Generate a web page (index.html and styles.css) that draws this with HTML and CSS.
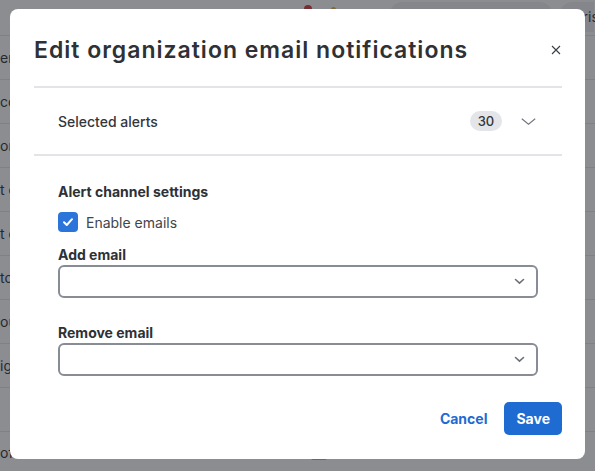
FILE: index.html
```html
<!DOCTYPE html>
<html lang="en">
<head>
<meta charset="utf-8">
<title>Edit organization email notifications</title>
<link rel="stylesheet" href="styles.css">
</head>
<body>
<div class="app">
  <div class="topbar">
    <span class="dot dot-red"></span>
    <span class="dot dot-yellow"></span>
    <span class="pill pill-search"></span>
    <span class="pill pill-user">Chris</span>
  </div>
  <div class="rows">
    <div class="row"><span class="cell">er</span></div>
    <div class="row"><span class="cell">co</span></div>
    <div class="row"><span class="cell">on</span></div>
    <div class="row"><span class="cell">t c</span></div>
    <div class="row"><span class="cell">t c</span></div>
    <div class="row"><span class="cell">tc</span></div>
    <div class="row"><span class="cell">ou</span></div>
    <div class="row"><span class="cell">ig</span></div>
    <div class="row"><span class="cell"></span></div>
    <div class="row row-last"><span class="cell">of cats</span><span class="tag"></span></div>
  </div>
</div>
<div class="overlay"></div>
<div class="modal" role="dialog" aria-labelledby="dlg-title">
  <div class="modal-header">
    <h1 id="dlg-title" class="modal-title">Edit organization email notifications</h1>
    <button class="close" aria-label="Close">
      <svg width="10" height="10" viewBox="0 0 10 10"><path d="M1 1L9 9M9 1L1 9" stroke="#3a3d42" stroke-width="1.1" fill="none"/></svg>
    </button>
  </div>
  <div class="alerts-row">
    <span class="alerts-label">Selected alerts</span>
    <span class="alerts-right">
      <span class="badge">30</span>
      <svg class="chev-lg" width="15" height="7" viewBox="0 0 15 7"><path d="M0.8 0.8L7.5 6.2L14.2 0.8" stroke="#70757e" stroke-width="1.1" fill="none"/></svg>
    </span>
  </div>
  <div class="settings">
    <div class="section-title">Alert channel settings</div>
    <label class="check-row">
      <span class="checkbox">
        <svg width="12" height="10" viewBox="0 0 12 10"><path d="M2 5.2L4.8 8L10 2.2" stroke="#fff" stroke-width="2" fill="none" stroke-linecap="round" stroke-linejoin="round"/></svg>
      </span>
      <span class="check-label">Enable emails</span>
    </label>
    <div class="field">
      <div class="field-label">Add email</div>
      <div class="select">
        <svg width="11" height="7" viewBox="0 0 11 7"><path d="M1.5 1.5L5.5 5.2L9.5 1.5" stroke="#6b7079" stroke-width="1.6" fill="none" stroke-linecap="round"/></svg>
      </div>
    </div>
    <div class="field field-2">
      <div class="field-label">Remove email</div>
      <div class="select">
        <svg width="11" height="7" viewBox="0 0 11 7"><path d="M1.5 1.5L5.5 5.2L9.5 1.5" stroke="#6b7079" stroke-width="1.6" fill="none" stroke-linecap="round"/></svg>
      </div>
    </div>
  </div>
  <div class="modal-footer">
    <button class="btn-text">Cancel</button>
    <button class="btn-primary">Save</button>
  </div>
</div>
</body>
</html>
```
FILE: styles.css
```css
* { box-sizing: border-box; }
html, body { margin: 0; padding: 0; }
body {
  width: 595px;
  height: 471px;
  overflow: hidden;
  background: #ffffff;
  font-family: Inter, "Liberation Sans", sans-serif;
  position: relative;
}

/* background page */
.app { width: 595px; overflow: hidden; }
.topbar {
  height: 36px;
  border-bottom: 1px solid #e4e5e8;
  display: flex;
  align-items: flex-start;
  overflow: hidden;
}
.dot { display: block; border-radius: 50%; margin-top: 5px; }
.dot-red { width: 8px; height: 8px; background: #d9383a; margin-left: 304px; }
.dot-yellow { width: 5px; height: 5px; background: #f2b233; margin-left: 19px; margin-top: 7px; }
.pill { display: block; border-radius: 12px; margin-top: 2px; height: 30px; flex-shrink: 0; }
.pill-search { width: 162px; background: #f0f0f2; margin-left: 54px; }
.pill-user {
  width: 34px; background: #f0f0f2; margin-left: 8px;
  border-radius: 12px 0 0 12px;
  font-size: 14px; line-height: 14px; color: #2d3034; padding: 8px 0 0 4px;
  white-space: nowrap;
}
.rows { display: flex; flex-direction: column; }
.row {
  height: 44px;
  border-bottom: 1px solid #e4e5e8;
  display: flex;
  align-items: center;
  font-size: 14px;
  color: #2d3034;
}
.row-last { align-items: flex-start; padding-top: 12px; }
.tag {
  display: block; width: 16px; height: 14px; background: #e7b52a;
  border-radius: 2px; margin-left: 266px; margin-top: 2px;
}

.overlay {
  position: absolute;
  inset: 0;
  background: rgba(32, 36, 44, 0.52);
}

/* modal */
.modal {
  position: absolute;
  left: 10px;
  top: 9px;
  width: 575px;
  height: 450px;
  background: #ffffff;
  border-radius: 8px;
  padding: 26px 23px 24px 24px;
  display: flex;
  flex-direction: column;
  color: #33363b;
}
.modal-header {
  display: flex;
  align-items: center;
  justify-content: space-between;
  height: 30px;
  margin-bottom: 21px;
}
.modal-title {
  margin: 0;
  font-size: 23px;
  line-height: 30px;
  font-weight: 600;
  color: #2e3136;
  letter-spacing: 1px;
  white-space: nowrap;
}
.close {
  border: 0;
  background: none;
  padding: 0;
  width: 10px;
  height: 10px;
  margin-right: 1px;
  display: flex;
  align-items: center;
  justify-content: center;
}
.alerts-row {
  border-top: 2px solid #e2e4e8;
  border-bottom: 2px solid #e2e4e8;
  height: 70px;
  display: flex;
  align-items: center;
  justify-content: space-between;
  padding: 0 26px 0 24px;
}
.alerts-label { font-size: 14px; font-weight: 500; color: #33363b; }
.alerts-right { display: flex; align-items: center; gap: 19px; }
.badge {
  width: 32px;
  height: 20px;
  border-radius: 10px;
  background: #e3e5e9;
  font-size: 13px;
  font-weight: 500;
  color: #33363b;
  display: flex;
  align-items: center;
  justify-content: center;
}
.chev-lg { display: block; }

.settings { padding: 26px 24px 0 24px; }
.section-title { font-size: 14px; line-height: 20px; font-weight: 700; color: #2e3136; }
.check-row {
  margin-top: 10px;
  display: flex;
  align-items: center;
  gap: 8px;
  height: 20px;
}
.checkbox {
  width: 20px;
  height: 20px;
  border-radius: 4px;
  background: #2b74d9;
  display: flex;
  align-items: center;
  justify-content: center;
}
.check-label { font-size: 14px; color: #42454a; }
.field { margin-top: 13px; }
.field-2 { margin-top: 25px; }
.field-label { font-size: 14px; line-height: 20px; font-weight: 700; color: #2e3136; }
.select {
  height: 33px;
  border: 2px solid #878c95;
  border-radius: 6px;
  display: flex;
  align-items: center;
  justify-content: flex-end;
  padding-right: 11px;
}
.select svg { display: block; }

.modal-footer {
  margin-top: auto;
  display: flex;
  justify-content: flex-end;
  align-items: center;
  gap: 17px;
}
.btn-text {
  border: 0;
  background: none;
  padding: 0;
  font-family: Inter, "Liberation Sans", sans-serif;
  font-size: 14px;
  font-weight: 700;
  color: #1f6bd1;
}
.btn-primary {
  border: 0;
  height: 33px;
  padding: 0 12px;
  border-radius: 5px;
  background: #1e6bd2;
  color: #ffffff;
  font-family: Inter, "Liberation Sans", sans-serif;
  font-size: 14px;
  font-weight: 700;
}
```
